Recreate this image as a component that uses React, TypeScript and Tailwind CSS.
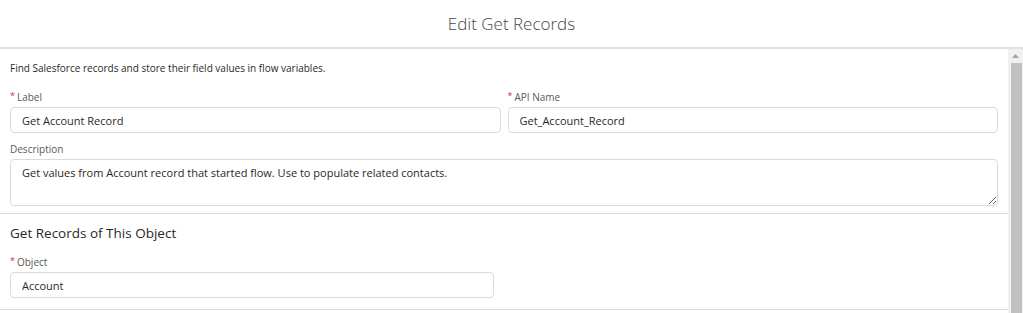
import React from "react";

function Req() {
  return <span className="text-[#c23934] text-[9px] align-top mr-[2px] relative top-[-1px]">*</span>;
}

function Label({ children, required }: { children: React.ReactNode; required?: boolean }) {
  return (
    <div className="text-[10px] leading-[14px] h-[14px] text-[#5a5856] mb-[3px]">
      {required && <Req />}
      {children}
    </div>
  );
}

function TextInput({ value }: { value: string }) {
  return (
    <input
      readOnly
      value={value}
      className="block h-[26px] w-full rounded-[4px] border border-[#dddbda] bg-white px-[11px] text-[11px] text-[#2b2826] outline-none"
    />
  );
}

export default function App() {
  return (
    <div
      className="w-[1023px] h-[313px] overflow-hidden bg-white text-[#2b2826]"
      style={{ fontFamily: '"Open Sans", "Noto Sans", sans-serif' }}
    >
      <header className="h-[49px] flex items-center justify-center border-b-2 border-[#e3e3e3]">
        <h1 className="text-[17px] font-light text-[#4a4846]">Edit Get Records</h1>
      </header>
      <div className="flex h-[264px]">
        <div className="flex-1 overflow-hidden">
          <section className="px-[10px] pt-[12px] pb-[7px] border-b border-[#dddbda]">
            <p className="text-[10px] leading-[14px] h-[14px]">
              Find Salesforce records and store their field values in flow variables.
            </p>
            <div className="mt-[15px] grid grid-cols-2 gap-x-[7px]">
              <div>
                <Label required>Label</Label>
                <TextInput value="Get Account Record" />
              </div>
              <div>
                <Label required>API Name</Label>
                <TextInput value="Get_Account_Record" />
              </div>
            </div>
            <div className="mt-[9px]">
              <Label>Description</Label>
              <textarea
                readOnly
                value="Get values from Account record that started flow. Use to populate related contacts."
                className="block h-[47px] w-full resize-y rounded-[4px] border border-[#dddbda] bg-white px-[11px] pt-[5px] text-[11px] leading-[16px] text-[#2b2826] outline-none"
              />
            </div>
          </section>
          <section className="px-[10px] pt-[10px] pb-[11px] border-b border-[#dddbda]">
            <h2 className="text-[13.5px] leading-[18px] h-[18px] text-[#2b2826]">Get Records of This Object</h2>
            <div className="mt-[13px] w-[484px]">
              <Label required>Object</Label>
              <TextInput value="Account" />
            </div>
          </section>
        </div>
        <div className="w-[15px] bg-[#f1f1f1] flex flex-col items-center">
          <div className="h-[14px] w-full flex items-center justify-center">
            <svg width="7" height="4" viewBox="0 0 7 4">
              <polygon points="0,4 7,4 3.5,0" fill="#a3a3a3" />
            </svg>
          </div>
          <div className="flex-1 w-[11px] ml-[1px] bg-[#c1c1c1]" />
        </div>
      </div>
    </div>
  );
}
